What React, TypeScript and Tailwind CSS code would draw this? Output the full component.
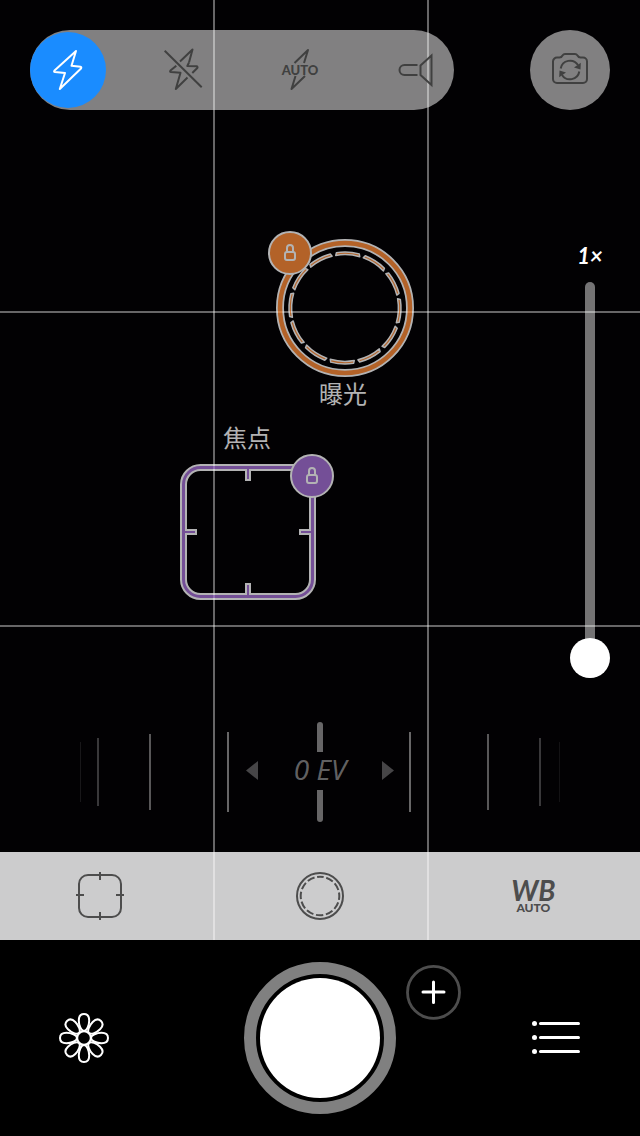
import { useState, type ReactNode } from "react";

const flashModes = ["on", "off", "auto", "torch"] as const;
type FlashMode = (typeof flashModes)[number];

function FlashIcon({ mode }: { mode: FlashMode }) {
  return (
    <svg viewBox="0 0 40 44" className="h-11 w-10" fill="none" stroke="currentColor" strokeWidth="2" strokeLinejoin="round">
      {mode === "on" && <path d="M28 3 6.5 22.5Q5.5 24 7 24L17 25 11.8 41 33 20.500Q33.800 19 32.500 18.800L23.500 17.800Z" />}
      {mode === "off" && (
        <>
          <path d="M.7 2.700 37.700 39.300" />
          <path d="M16 13.500 28.500 1.500 25 14.500" />
          <path d="M25 14.500 23.300 18 32.700 18.300Q34 18.800 33.300 20L28.300 25" />
          <path d="M12.300 17.700 6.500 22.500Q5.500 24 7 24L16.500 24.800 11.800 41 23.500 29.500" />
        </>
      )}
      {mode === "auto" && (
        <>
          <path d="M14.500 15 28 2 24 15" />
          <path d="M15.500 28 11.500 41 25 28" />
        </>
      )}
      {mode === "torch" && (
        <>
          <path d="M21.500 17H8.500a5 5 0 0 0 0 10H21.500" />
          <path d="M24.500 17.500 35.500 7.500V37L24.500 27Z" strokeLinejoin="miter" />
        </>
      )}
    </svg>
  );
}

function CameraFlipIcon() {
  return (
    <svg viewBox="0 0 40 40" className="size-10" fill="none" stroke="currentColor" strokeWidth="2" strokeLinejoin="round">
      <path d="M7 7.500H9.500Q11.500 7.500 12.500 5.500 13.500 4 15 4H25Q26.500 4 27.500 5.500 28.500 7.500 30.500 7.500H33a4 4 0 0 1 4 4V29a4 4 0 0 1-4 4H7a4 4 0 0 1-4-4V11.500a4 4 0 0 1 4-4Z" />
      <path d="M10.700 18.500a9.500 9.500 0 0 1 17.300-3.500M29.300 21.500a9.500 9.500 0 0 1-17.300 3.500" />
      <path d="M24 17.500 30.800 12.800 30.500 19.500ZM16 22.500 9.200 27.200 9.500 20.500Z" fill="currentColor" stroke="none" />
    </svg>
  );
}

function LockBadge({ x, y, color }: { x: number; y: number; color: string }) {
  return (
    <g transform={`translate(${x} ${y})`} fill="none" stroke="#fff" strokeWidth="2">
      <circle r="21" fill={color} />
      <rect x="-5" y="-1" width="10" height="8" rx="2" />
      <path d="M-3-1V-5A3 3 0 0 1 3-5V-1" />
    </g>
  );
}

const ORANGE = "#ff8c38";
const PURPLE = "#a571d6";

function ringDash(angle: number) {
  const point = (radius: number, degrees: number) => {
    const t = ((degrees - 90) * Math.PI) / 180;
    return `${(77 + radius * Math.cos(t)).toFixed(2)} ${(77 + radius * Math.sin(t)).toFixed(2)}`;
  };
  return `M${point(56, angle - 11.8)}A56 56 0 0 1 ${point(56, angle + 11.8)}L${point(53.4, angle + 13)}A53.400 53.400 0 0 0 ${point(53.4, angle - 13)}Z`;
}

function ExposureReticle() {
  return (
    <svg viewBox="0 0 150 146" className="h-[146px] w-[150px]" fill="none">
      <circle cx="77" cy="77" r="65" stroke="#fff" strokeWidth="8" />
      <circle cx="77" cy="77" r="65" stroke={ORANGE} strokeWidth="4.500" />
      {Array.from({ length: 12 }, (_, i) => (
        <path key={i} d={ringDash(i * 30 + 3)} fill={ORANGE} stroke="#fff" strokeWidth="1.500" strokeLinejoin="round" />
      ))}
      <LockBadge x={22} y={22} color={ORANGE} />
    </svg>
  );
}

function FocusReticle() {
  return (
    <svg viewBox="0 0 154 146" className="h-[146px] w-[154px]" fill="none">
      <rect x="3.500" y="13.500" width="129" height="129" rx="17" stroke="#fff" strokeWidth="7" />
      <path d="M68 14V27M68 142V129M4 78H17M132 78H119" stroke="#fff" strokeWidth="6" />
      <rect x="3.500" y="13.500" width="129" height="129" rx="17" stroke={PURPLE} strokeWidth="3" />
      <path d="M68 14V25M68 142V131M4 78H15M132 78H121" stroke={PURPLE} strokeWidth="2" />
      <LockBadge x={132} y={22} color={PURPLE} />
    </svg>
  );
}

function DialSide({ ticks, arrow }: { ticks: number[][]; arrow: string }) {
  return (
    <svg viewBox="0 0 180 100" className="h-[100px] w-[180px]" fill="#fff">
      {ticks.map(([x, width, top, height, opacity]) => (
        <rect key={x} x={x} y={top} width={width} height={height} opacity={opacity} />
      ))}
      <path d={arrow} opacity="0.27" />
    </svg>
  );
}

function ExposureDial() {
  return (
    <div className="relative mb-[30px] flex justify-center">
      <DialSide
        ticks={[
          [0, 1, 20, 60, 0.09],
          [17, 2, 16, 68, 0.22],
          [69, 2, 12, 76, 0.34],
          [147, 2, 10, 80, 0.4],
        ]}
        arrow="M166 48.500 178 39V58Z"
      />
      <div className="flex w-[120px] flex-col items-center text-white/40">
        <span className="h-[30px] w-1.5 rounded-t-sm bg-current" />
        <output className="h-[38px] font-['Open_Sans'] text-[28px] leading-[34px] whitespace-nowrap italic">0 EV</output>
        <span className="h-8 w-1.5 rounded-b-sm bg-current" />
      </div>
      <DialSide
        ticks={[
          [29, 2, 10, 80, 0.4],
          [107, 2, 12, 76, 0.34],
          [159, 2, 16, 68, 0.22],
          [179, 1, 20, 60, 0.07],
        ]}
        arrow="M14 48.500 2 39V58Z"
      />
    </div>
  );
}

function ToolButton({ label, className = "", children }: { label: string; className?: string; children: ReactNode }) {
  return (
    <button type="button" aria-label={label} className={`flex items-center justify-center ${className}`}>
      {children}
    </button>
  );
}

export default function App() {
  const [flash, setFlash] = useState<FlashMode>("on");
  const [zoom, setZoom] = useState(1);

  return (
    <div className="flex min-h-screen flex-col bg-black font-['Lato','Noto_Sans_CJK_SC',sans-serif] text-white">
      <main className="relative flex flex-1 flex-col overflow-hidden bg-[#020103]">
        <div className="pointer-events-none absolute inset-y-0 -right-px left-px flex justify-evenly">
          <span className="w-0.5 bg-white/40" />
          <span className="w-0.5 bg-white/40" />
        </div>
        <div className="pointer-events-none absolute inset-x-0 -top-px bottom-px flex flex-col justify-evenly">
          <span className="h-0.5 bg-white/40" />
          <span className="h-0.5 bg-white/40" />
        </div>

        <header className="relative flex justify-between px-[30px] pt-[30px]">
          <div className="flex h-20 items-center gap-10 rounded-full bg-white/50">
            {flashModes.map((mode) => (
              <button
                key={mode}
                type="button"
                aria-label={`Flash ${mode}`}
                aria-pressed={flash === mode}
                onClick={() => setFlash(mode)}
                className={`relative flex size-[76px] items-center justify-center rounded-full ${
                  flash === mode ? "bg-[#1a8cff] text-white" : "text-[#404040]"
                }`}
              >
                <FlashIcon mode={mode} />
                {mode === "auto" && (
                  <span className="absolute inset-x-0 text-center text-[13px] leading-3 font-black">AUTO</span>
                )}
              </button>
            ))}
          </div>
          <button
            type="button"
            aria-label="Switch camera"
            className="flex size-20 items-center justify-center rounded-full bg-white/50 text-[#404040]"
          >
            <CameraFlipIcon />
          </button>
        </header>

        <section className="relative flex flex-1 justify-end pr-[30px]">
          <figure className="absolute top-[121px] left-[268px] flex flex-col items-center opacity-70">
            <ExposureReticle />
            <figcaption className="mt-0.5 text-2xl leading-[30px]">曝光</figcaption>
          </figure>
          <figure className="absolute top-[316px] left-[180px] flex flex-col items-center opacity-70">
            <figcaption className="mb-1 pr-5 text-2xl leading-6">焦点</figcaption>
            <FocusReticle />
          </figure>
          <label className="flex w-10 flex-col items-center gap-3.5 pt-[134px] pb-11">
            <span className="text-[22px] leading-6 font-bold italic">{zoom}×</span>
            <input
              type="range"
              min={1}
              max={6}
              value={zoom}
              aria-label="Zoom"
              onChange={(event) => setZoom(Number(event.target.value))}
              className="h-[396px] w-10 appearance-none bg-transparent [direction:rtl] [writing-mode:vertical-lr] [&::-webkit-slider-runnable-track]:w-2.5 [&::-webkit-slider-runnable-track]:rounded-full [&::-webkit-slider-runnable-track]:bg-white/45 [&::-webkit-slider-thumb]:-ml-[15px] [&::-webkit-slider-thumb]:size-10 [&::-webkit-slider-thumb]:appearance-none [&::-webkit-slider-thumb]:rounded-full [&::-webkit-slider-thumb]:bg-white"
            />
          </label>
        </section>

        <ExposureDial />

        <nav className="relative grid h-[88px] grid-cols-3 bg-white/80 text-[#4d4d4d]">
          <ToolButton label="Focus" className="pr-[14px]">
            <svg viewBox="0 0 48 48" className="size-12" fill="none" stroke="currentColor" strokeWidth="2">
              <rect x="3" y="3" width="42" height="42" rx="9" />
              <path d="M24 0V8M24 40V48M0 23H8M40 23H48" />
            </svg>
          </ToolButton>
          <ToolButton label="Exposure">
            <svg viewBox="0 0 48 48" className="size-12" fill="none" stroke="currentColor" strokeWidth="2">
              <circle cx="24" cy="24" r="23" />
              <circle cx="24" cy="24" r="19.300" strokeDasharray="7.500 2.605" strokeDashoffset="3.750" transform="rotate(-90 24 24)" />
            </svg>
          </ToolButton>
          <ToolButton label="White balance auto" className="flex-col">
            <span className="text-[28px] leading-6 font-bold italic">WB</span>
            <span className="text-xs leading-3 font-black">AUTO</span>
          </ToolButton>
        </nav>
      </main>

      <footer className="grid h-[196px] grid-cols-[1fr_auto_1fr] items-center">
        <ToolButton label="Presets" className="ml-[58px] justify-self-start">
          <svg viewBox="-26 -26 52 52" className="size-[52px]" fill="none" stroke="currentColor" strokeWidth="2">
            <circle r="6.800" />
            {[0, 45, 90, 135, 180, 225, 270, 315].map((angle) => (
              <path
                key={angle}
                transform={`rotate(${angle})`}
                d="M0-7C-3-7-5.200-13-5.200-17.500C-5.200-21.500-3.200-24 0-24C3.200-24 5.200-21.500 5.200-17.500C5.200-13 3-7 0-7Z"
              />
            ))}
          </svg>
        </ToolButton>
        <button
          type="button"
          aria-label="Take photo"
          className="flex size-[152px] items-center justify-center rounded-full border-12 border-[#808080]"
        >
          <span className="size-[120px] rounded-full bg-white" />
        </button>
        <div className="flex items-center justify-between pr-[60px] pl-2.5">
          <ToolButton label="Add" className="mb-[92px]">
            <svg viewBox="0 0 55 55" className="size-[55px]" fill="none">
              <circle cx="27.500" cy="27.400" r="26" stroke="#4d4d4d" strokeWidth="2.800" />
              <path d="M27.500 17V37.500M17 27H38" stroke="#fff" strokeWidth="3" strokeLinecap="round" />
            </svg>
          </ToolButton>
          <ToolButton label="Menu">
            <svg viewBox="0 0 48 34" className="h-[34px] w-12" fill="#fff">
              {[2.5, 16.5, 30.5].map((y) => (
                <g key={y}>
                  <circle cx="2.500" cy={y} r="2.500" />
                  <rect x="7" y={y - 1.5} width="41" height="3" rx="1.500" />
                </g>
              ))}
            </svg>
          </ToolButton>
        </div>
      </footer>
    </div>
  );
}
